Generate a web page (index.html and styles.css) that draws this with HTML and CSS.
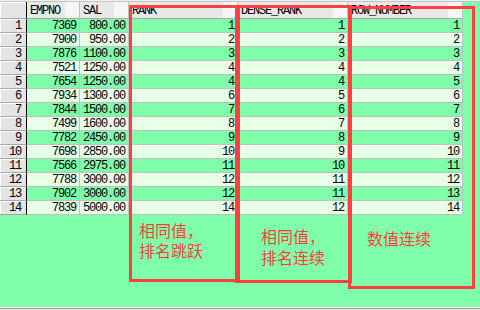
FILE: index.html
```html
<!DOCTYPE html>
<html>
<head>
<meta charset="utf-8">
<link rel="stylesheet" href="styles.css">
</head>
<body>
<div class="page">
  <div class="topbar"></div>
  <div class="area">
    <div class="grid">
      <div class="row head"><div class="c rn"></div><div class="c h">EMPNO</div><div class="c h">SAL</div><div class="c h">RANK</div><div class="c h">DENSE_RANK</div><div class="c h">ROW_NUMBER</div></div>
      <div class="row g"><div class="c rn">1</div><div class="c">7369</div><div class="c">800.00</div><div class="c">1</div><div class="c">1</div><div class="c">1</div></div>
      <div class="row l"><div class="c rn">2</div><div class="c">7900</div><div class="c">950.00</div><div class="c">2</div><div class="c">2</div><div class="c">2</div></div>
      <div class="row g"><div class="c rn">3</div><div class="c">7876</div><div class="c">1100.00</div><div class="c">3</div><div class="c">3</div><div class="c">3</div></div>
      <div class="row l"><div class="c rn">4</div><div class="c">7521</div><div class="c">1250.00</div><div class="c">4</div><div class="c">4</div><div class="c">4</div></div>
      <div class="row g"><div class="c rn">5</div><div class="c">7654</div><div class="c">1250.00</div><div class="c">4</div><div class="c">4</div><div class="c">5</div></div>
      <div class="row l"><div class="c rn">6</div><div class="c">7934</div><div class="c">1300.00</div><div class="c">6</div><div class="c">5</div><div class="c">6</div></div>
      <div class="row g"><div class="c rn">7</div><div class="c">7844</div><div class="c">1500.00</div><div class="c">7</div><div class="c">6</div><div class="c">7</div></div>
      <div class="row l"><div class="c rn">8</div><div class="c">7499</div><div class="c">1600.00</div><div class="c">8</div><div class="c">7</div><div class="c">8</div></div>
      <div class="row g"><div class="c rn">9</div><div class="c">7782</div><div class="c">2450.00</div><div class="c">9</div><div class="c">8</div><div class="c">9</div></div>
      <div class="row l"><div class="c rn">10</div><div class="c">7698</div><div class="c">2850.00</div><div class="c">10</div><div class="c">9</div><div class="c">10</div></div>
      <div class="row g"><div class="c rn">11</div><div class="c">7566</div><div class="c">2975.00</div><div class="c">11</div><div class="c">10</div><div class="c">11</div></div>
      <div class="row l"><div class="c rn">12</div><div class="c">7788</div><div class="c">3000.00</div><div class="c">12</div><div class="c">11</div><div class="c">12</div></div>
      <div class="row g"><div class="c rn">13</div><div class="c">7902</div><div class="c">3000.00</div><div class="c">12</div><div class="c">11</div><div class="c">13</div></div>
      <div class="row l"><div class="c rn">14</div><div class="c">7839</div><div class="c">5000.00</div><div class="c">14</div><div class="c">12</div><div class="c">14</div></div>
    </div>
  </div>
  <div class="foot"></div>
  <div class="box b1">相同值，<br>排名跳跃</div>
  <div class="box b2">相同值，<br>排名连续</div>
  <div class="box b3">数值连续</div>
</div>
</body>
</html>
```

FILE: styles.css
```css
html, body {
  margin: 0;
  padding: 0;
}
body {
  width: 480px;
  height: 310px;
  overflow: hidden;
  background: #80ffaa;
  font-family: "Liberation Mono", monospace;
}
.page {
  position: relative;
  display: flex;
  flex-direction: column;
  height: 310px;
}
.topbar {
  height: 1px;
  background: #f0f0f0;
  border-bottom: 1px solid #c4c4c4;
}
.area {
  flex: 1;
  background: #80ffaa;
}
.foot {
  height: 1px;
  border-top: 1px solid #ffffff;
  background: #a0a0a0;
  border-bottom: 1px solid #e4e4e4;
}
.grid {
  display: grid;
  grid-template-columns: 27px 53px 49px 109px 110px 115px;
  width: 463px;
}
.row {
  display: contents;
}
.c {
  box-sizing: border-box;
  height: 14px;
  border-right: 1px solid #c0c0c0;
  border-bottom: 1px solid #c0c0c0;
  font-size: 12px;
  letter-spacing: -1.2px;
  line-height: 11px;
  padding-top: 2px;
  padding-right: 3px;
  text-align: right;
  white-space: nowrap;
  overflow: hidden;
  color: #000;
}
.row.g .c {
  background: #80ffaa;
}
.row.l .c {
  background: #e8ffe8;
}
.row .c.rn {
  background: #e4e4e4;
  border-right: 1px solid #000;
  border-bottom: 1px solid #a8a8a8;
  box-shadow: inset 1px 1px 0 #ffffff;
  padding-right: 5px;
}
.head .c {
  height: 17px;
  padding-top: 4px;
  border-bottom: 1px solid #a8a8a8;
  background: linear-gradient(to left, #f6f6f6 14px, #e8e8e8 14px);
}
.head .c.h {
  text-align: left;
  padding-left: 3px;
  padding-right: 0;
}
.head .c.rn {
  background: #e4e4e4;
}
.box {
  position: absolute;
  box-sizing: border-box;
  border: 3px solid #ff4040;
  color: #ff3c3c;
  font-family: "Noto Sans CJK SC", sans-serif;
  font-size: 16px;
  line-height: 20px;
}
.b1 {
  left: 129px;
  top: 5px;
  width: 111px;
  height: 277px;
  padding: 212px 0 0 7px;
}
.b2 {
  left: 235px;
  top: 5px;
  width: 117px;
  height: 278px;
  padding: 218px 0 0 23px;
  line-height: 21px;
}
.b3 {
  left: 348px;
  top: 6px;
  width: 127px;
  height: 283px;
  padding: 219px 0 0 16px;
}
```
